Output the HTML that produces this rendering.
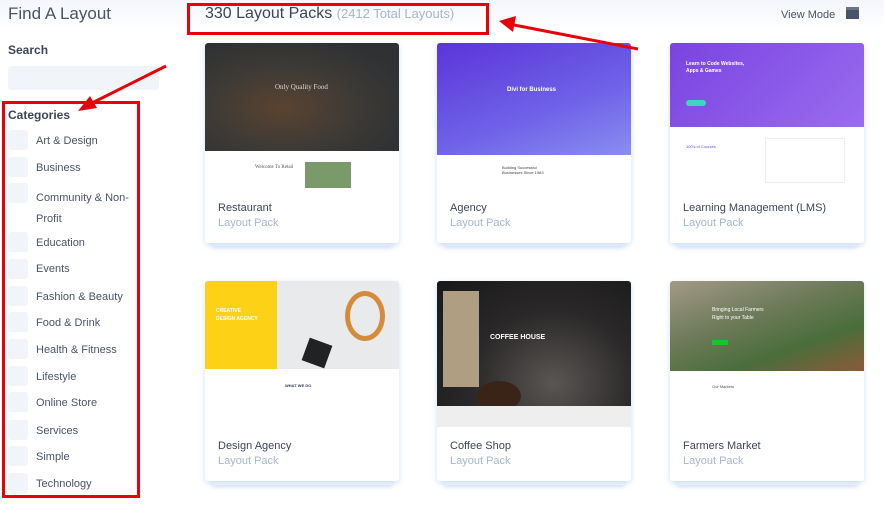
<!DOCTYPE html>
<html><head><meta charset="utf-8"><style>
*{margin:0;padding:0;box-sizing:border-box}
body{width:884px;height:505px;overflow:hidden;background:#fff;font-family:"Liberation Sans",sans-serif;position:relative;color:#333c4e}
.a{position:absolute}
.top{left:0;top:0;width:884px;height:30px;background:linear-gradient(#f4f6fb,#fff)}
.h1{left:8px;top:4px;font-size:17px;color:#4a5468}
.lbl{font-size:12px;font-weight:bold;color:#3d4557}
.cb{width:20px;height:20px;background:#f1f4f9;border-radius:3px}
.cat{font-size:11px;color:#4a5468;left:36px}
.card{width:194px;background:#fff;border-radius:3px;box-shadow:0 2px 6px rgba(120,170,230,.35);overflow:hidden}
.st{width:180px;height:6px;background:#f4f8fd;box-shadow:0 2px 4px rgba(120,170,230,.3)}
.t{font-size:11px;color:#3d4557;left:13px}
.s{font-size:11px;color:#a7b6cd;left:13px}
.red{border:3px solid #e8000b}
</style></head><body>
<div class="a top"></div>
<div class="a h1">Find A Layout</div>
<div class="a lbl" style="left:8px;top:43px">Search</div>
<div class="a" style="left:8px;top:66px;width:151px;height:24px;background:#f1f4f9;border-radius:3px"></div>
<div class="a lbl" style="left:8px;top:108px">Categories</div>
<div class="a red" style="left:2px;top:101px;width:138px;height:397px"></div>
<div class="a cb" style="left:8px;top:130px"></div><div class="a cat" style="top:135px">Art &amp; Design</div>
<div class="a cb" style="left:8px;top:157px"></div><div class="a cat" style="top:162px">Business</div>
<div class="a cb" style="left:8px;top:183px"></div><div class="a cat" style="top:188px;line-height:21px;width:100px">Community &amp; Non-Profit</div>
<div class="a cb" style="left:8px;top:232px"></div><div class="a cat" style="top:237px">Education</div>
<div class="a cb" style="left:8px;top:259px"></div><div class="a cat" style="top:263px">Events</div>
<div class="a cb" style="left:8px;top:286px"></div><div class="a cat" style="top:291px">Fashion &amp; Beauty</div>
<div class="a cb" style="left:8px;top:312px"></div><div class="a cat" style="top:317px">Food &amp; Drink</div>
<div class="a cb" style="left:8px;top:339px"></div><div class="a cat" style="top:344px">Health &amp; Fitness</div>
<div class="a cb" style="left:8px;top:366px"></div><div class="a cat" style="top:371px">Lifestyle</div>
<div class="a cb" style="left:8px;top:392px"></div><div class="a cat" style="top:397px">Online Store</div>
<div class="a cb" style="left:8px;top:420px"></div><div class="a cat" style="top:425px">Services</div>
<div class="a cb" style="left:8px;top:446px"></div><div class="a cat" style="top:451px">Simple</div>
<div class="a cb" style="left:8px;top:473px"></div><div class="a cat" style="top:478px">Technology</div>

<div class="a red" style="left:187px;top:3px;width:302px;height:32px"></div>
<div class="a" style="left:205px;top:5px;font-size:16px;color:#3d4557">330 Layout Packs <span style="font-size:13px;color:#a7b6cd">(2412 Total Layouts)</span></div>
<div class="a" style="left:781px;top:9px;font-size:11px;color:#4a5468">View Mode</div>
<div class="a" style="left:846px;top:7px;width:13px;height:12px;background:#4a5468;border-top:3px solid #6a7488"></div>

<!-- stacks -->
<div class="a st" style="left:212px;top:240px"></div><div class="a st" style="left:444px;top:240px"></div><div class="a st" style="left:677px;top:240px"></div>
<div class="a st" style="left:212px;top:479px"></div><div class="a st" style="left:444px;top:479px"></div><div class="a st" style="left:677px;top:479px"></div>

<div class="a card" style="left:205px;top:43px;height:200px">
 <div class="a" style="left:0;top:0;width:194px;height:108px;background:radial-gradient(ellipse at 40% 60%,#5a4330 0,#3d3a36 45%,#2f3133 80%)"></div>
 <div class="a" style="left:70px;top:40px;font-size:7px;color:#ddd;font-family:'Liberation Serif'">Only Quality Food</div>
 <div class="a" style="left:50px;top:122px;font-size:5px;color:#555;font-family:'Liberation Serif'">Welcome To Retail</div>
 <div class="a" style="left:100px;top:119px;width:46px;height:26px;background:#7a9a6a"></div>
 <div class="a t" style="top:159px">Restaurant</div><div class="a s" style="top:174px">Layout Pack</div>
</div>
<div class="a card" style="left:437px;top:43px;height:200px">
 <div class="a" style="left:0;top:0;width:194px;height:112px;background:linear-gradient(160deg,#5b34d8,#6f63e8 60%,#8a8df0)"></div>
 <div class="a" style="left:70px;top:44px;font-size:6px;color:#fff;font-weight:bold">Divi for Business</div>
 <div class="a" style="left:65px;top:122px;font-size:4px;color:#444">Building Successful<br>Businesses Since 1983</div>
 <div class="a t" style="top:159px">Agency</div><div class="a s" style="top:174px">Layout Pack</div>
</div>
<div class="a card" style="left:670px;top:43px;height:200px">
 <div class="a" style="left:0;top:0;width:194px;height:84px;background:linear-gradient(135deg,#7a43e0,#9a6cf0)"></div>
 <div class="a" style="left:16px;top:18px;font-size:5px;color:#fff;font-weight:bold;line-height:7px">Learn to Code Websites,<br>Apps &amp; Games</div>
 <div class="a" style="left:16px;top:57px;width:20px;height:6px;background:#3fd6c0;border-radius:3px"></div>
 <div class="a" style="left:95px;top:95px;width:80px;height:45px;border:1px solid #eee"></div>
 <div class="a" style="left:16px;top:101px;font-size:4px;color:#7a43e0">100's of Courses</div>
 <div class="a t" style="top:159px">Learning Management (LMS)</div><div class="a s" style="top:174px">Layout Pack</div>
</div>

<div class="a card" style="left:205px;top:281px;height:200px">
 <div class="a" style="left:0;top:0;width:72px;height:88px;background:#fdd116"></div>
 <div class="a" style="left:72px;top:0;width:122px;height:88px;background:#e8eaec"></div>
 <div class="a" style="left:100px;top:60px;width:24px;height:24px;background:#222;transform:rotate(20deg)"></div>
 <div class="a" style="left:140px;top:10px;width:40px;height:50px;border:5px solid #d68a3c;border-radius:50%"></div>
 <div class="a" style="left:11px;top:26px;font-size:4px;color:#fff;font-weight:bold;line-height:8px;font-size:5px">CREATIVE<br>DESIGN AGENCY</div>
 <div class="a" style="left:80px;top:102px;font-size:4px;font-weight:bold">WHAT WE DO</div>
 <div class="a t" style="top:159px">Design Agency</div><div class="a s" style="top:174px">Layout Pack</div>
</div>
<div class="a card" style="left:437px;top:281px;height:200px">
 <div class="a" style="left:0;top:0;width:194px;height:146px;background:radial-gradient(ellipse at 60% 70%,#5a5654 0,#2a2828 50%,#181818)"></div>
 <div class="a" style="left:6px;top:10px;width:36px;height:96px;background:#b09e83"></div>
 <div class="a" style="left:40px;top:100px;width:44px;height:30px;background:#3a2418;border-radius:50%"></div>
 <div class="a" style="left:0;top:125px;width:194px;height:21px;background:#eee"></div>
 <div class="a" style="left:53px;top:53px;font-size:7px;color:#fff;font-weight:bold">COFFEE HOUSE</div>
 <div class="a t" style="top:159px">Coffee Shop</div><div class="a s" style="top:174px">Layout Pack</div>
</div>
<div class="a card" style="left:670px;top:281px;height:200px">
 <div class="a" style="left:0;top:0;width:194px;height:90px;background:linear-gradient(160deg,#a29a86,#6e7a5a 40%,#4a6e3a 70%,#8a5a3a)"></div>
 <div class="a" style="left:42px;top:25px;font-size:5px;color:#fff;line-height:8px">Bringing Local Farmers<br>Right to your Table</div>
 <div class="a" style="left:42px;top:59px;width:16px;height:5px;background:#1fc12a"></div>
 <div class="a" style="left:42px;top:103px;font-size:4px;color:#555">Our Markets</div>
 <div class="a t" style="top:159px">Farmers Market</div><div class="a s" style="top:174px">Layout Pack</div>
</div>

<svg class="a" style="left:0;top:0" width="884" height="505">
 <line x1="166" y1="66" x2="92" y2="103" stroke="#e8000b" stroke-width="3"/>
 <polygon points="78,111 90,96 97,108" fill="#e8000b"/>
 <line x1="638" y1="49" x2="514" y2="25" stroke="#e8000b" stroke-width="3"/>
 <polygon points="499,21 516,16 513,32" fill="#e8000b"/>
</svg>
</body></html>
